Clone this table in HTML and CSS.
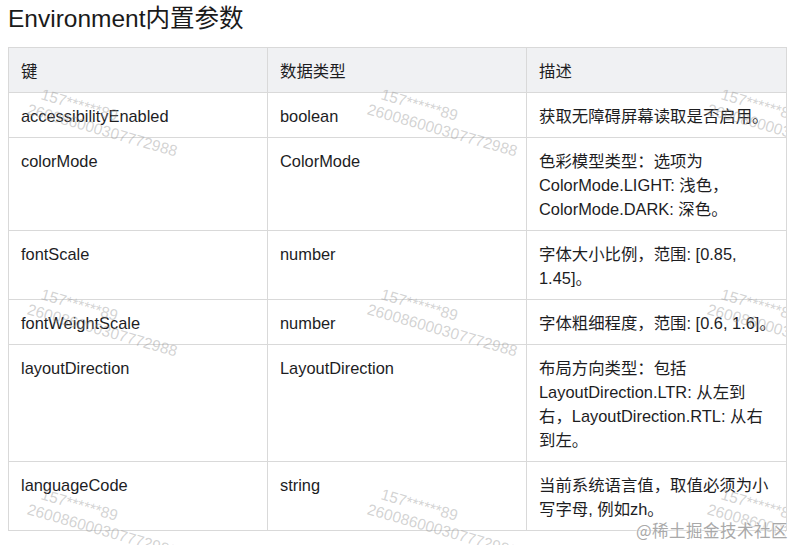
FILE: index.html
```html
<!DOCTYPE html>
<html lang="zh">
<head>
<meta charset="utf-8">
<link rel="stylesheet" href="styles.css">
</head>
<body>
<div class="page">
  <h2 class="title">Environment内置参数</h2>
  <table class="params">
    <colgroup><col class="c1"><col class="c2"><col class="c3"></colgroup>
    <thead>
      <tr><th>键</th><th>数据类型</th><th>描述</th></tr>
    </thead>
    <tbody>
      <tr><td>accessibilityEnabled</td><td>boolean</td><td>获取无障碍屏幕读取是否启用。</td></tr>
      <tr><td>colorMode</td><td>ColorMode</td><td>色彩模型类型：选项为<br>ColorMode.LIGHT: 浅色，<br>ColorMode.DARK: 深色。</td></tr>
      <tr><td>fontScale</td><td>number</td><td>字体大小比例，范围: [0.85,<br>1.45]。</td></tr>
      <tr><td>fontWeightScale</td><td>number</td><td class="nowrap">字体粗细程度，范围: [0.6, 1.6]。</td></tr>
      <tr><td>layoutDirection</td><td>LayoutDirection</td><td>布局方向类型：包括<br>LayoutDirection.LTR: 从左到<br>右，LayoutDirection.RTL: 从右<br>到左。</td></tr>
      <tr><td>languageCode</td><td>string</td><td>当前系统语言值，取值必须为小<br>写字母, 例如zh。</td></tr>
    </tbody>
  </table>
  <div class="watermarks" aria-hidden="true">
    <div class="wm" style="left:38px;top:84px"><span>157******89</span><span>260086000307772988</span></div>
    <div class="wm" style="left:378px;top:84px"><span>157******89</span><span>260086000307772988</span></div>
    <div class="wm" style="left:718px;top:84px"><span>157******89</span><span>260086000307772988</span></div>
    <div class="wm" style="left:38px;top:284px"><span>157******89</span><span>260086000307772988</span></div>
    <div class="wm" style="left:378px;top:284px"><span>157******89</span><span>260086000307772988</span></div>
    <div class="wm" style="left:718px;top:284px"><span>157******89</span><span>260086000307772988</span></div>
    <div class="wm" style="left:38px;top:484px"><span>157******89</span><span>260086000307772988</span></div>
    <div class="wm" style="left:378px;top:484px"><span>157******89</span><span>260086000307772988</span></div>
    <div class="wm" style="left:718px;top:484px"><span>157******89</span><span>260086000307772988</span></div>
  </div>
  <div class="brand">@稀土掘金技术社区</div>
</div>
</body>
</html>
```

FILE: styles.css
```css
html, body {
  margin: 0;
  padding: 0;
  background: #ffffff;
}
body {
  font-family: "Liberation Sans", "Noto Sans CJK SC", sans-serif;
  color: #1d1d1f;
  width: 794px;
  height: 545px;
  overflow: hidden;
}
.page {
  position: relative;
  padding: 4px 8px 0 8px;
  height: 545px;
  box-sizing: border-box;
  overflow: hidden;
}
.title {
  margin: 0 0 13px 0;
  font-size: 24.5px;
  font-weight: 400;
  line-height: 30px;
  color: #1a1a1a;
}
.params {
  width: 778px;
  border-collapse: collapse;
  table-layout: fixed;
  font-size: 16.4px;
  line-height: 24px;
}
.params col.c1 { width: 259px; }
.params col.c2 { width: 259px; }
.params col.c3 { width: 260px; }
.params th,
.params td {
  border: 1px solid #d9d9d9;
  padding: 11px 12px 9px 12px;
  text-align: left;
  vertical-align: top;
  font-weight: 400;
}
.params thead th {
  background: #f0f1f3;
}
.nowrap { white-space: nowrap; }
.watermarks {
  position: absolute;
  left: 0;
  top: 0;
  right: 8px;
  bottom: 0;
  overflow: hidden;
  pointer-events: none;
}
.wm {
  position: absolute;
  display: flex;
  flex-direction: column;
  transform: rotate(16deg);
  transform-origin: 0 0;
  font-family: "Liberation Sans", sans-serif;
  font-size: 15.5px;
  line-height: 18px;
  color: rgba(150, 150, 150, 0.42);
  white-space: nowrap;
}
.wm span:first-child {
  margin-left: 6px;
}
.wm span:last-child {
  margin-left: -3px;
}
.brand {
  position: absolute;
  right: 6px;
  bottom: 5px;
  font-family: "Noto Sans CJK SC", sans-serif;
  font-size: 16.5px;
  line-height: 20px;
  color: #a9a9a9;
  letter-spacing: 0.5px;
  text-shadow: 0 0 2px #fff, 0 0 2px #fff;
}
```
